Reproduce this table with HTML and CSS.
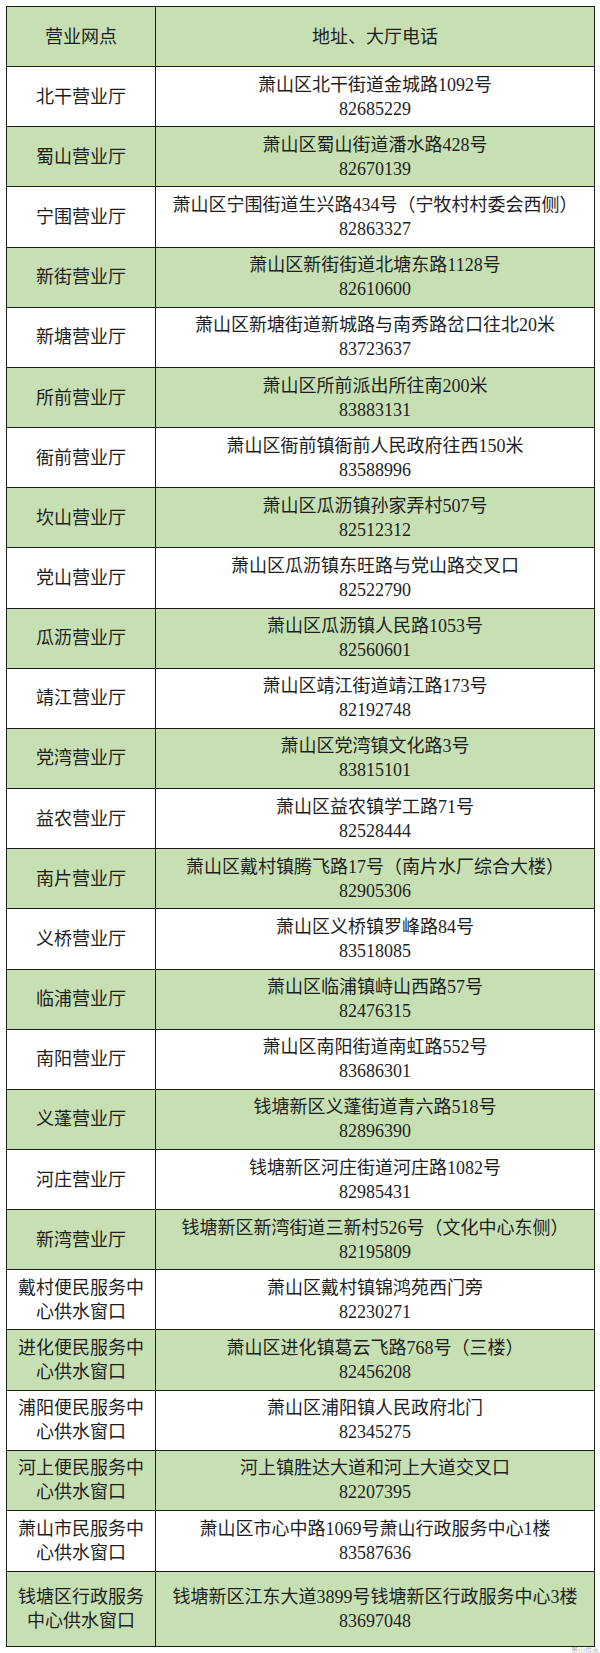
FILE: index.html
```html
<!DOCTYPE html>
<html lang="zh-CN">
<head>
<meta charset="utf-8">
<title>营业网点</title>
<link rel="stylesheet" href="styles.css">
</head>
<body>
<div class="page">
  <table class="sheet">
    <colgroup><col class="c-name"><col class="c-addr"></colgroup>
    <thead>
      <tr><th>营业网点</th><th>地址、大厅电话</th></tr>
    </thead>
    <tbody>
      <tr><td>北干营业厅</td><td><span class="l">萧山区北干街道金城路1092号</span><span class="l">82685229</span></td></tr>
      <tr><td>蜀山营业厅</td><td><span class="l">萧山区蜀山街道潘水路428号</span><span class="l">82670139</span></td></tr>
      <tr><td>宁围营业厅</td><td><span class="l">萧山区宁围街道生兴路434号（宁牧村村委会西侧）</span><span class="l">82863327</span></td></tr>
      <tr><td>新街营业厅</td><td><span class="l">萧山区新街街道北塘东路1128号</span><span class="l">82610600</span></td></tr>
      <tr><td>新塘营业厅</td><td><span class="l">萧山区新塘街道新城路与南秀路岔口往北20米</span><span class="l">83723637</span></td></tr>
      <tr><td>所前营业厅</td><td><span class="l">萧山区所前派出所往南200米</span><span class="l">83883131</span></td></tr>
      <tr><td>衙前营业厅</td><td><span class="l">萧山区衙前镇衙前人民政府往西150米</span><span class="l">83588996</span></td></tr>
      <tr><td>坎山营业厅</td><td><span class="l">萧山区瓜沥镇孙家弄村507号</span><span class="l">82512312</span></td></tr>
      <tr><td>党山营业厅</td><td><span class="l">萧山区瓜沥镇东旺路与党山路交叉口</span><span class="l">82522790</span></td></tr>
      <tr><td>瓜沥营业厅</td><td><span class="l">萧山区瓜沥镇人民路1053号</span><span class="l">82560601</span></td></tr>
      <tr><td>靖江营业厅</td><td><span class="l">萧山区靖江街道靖江路173号</span><span class="l">82192748</span></td></tr>
      <tr><td>党湾营业厅</td><td><span class="l">萧山区党湾镇文化路3号</span><span class="l">83815101</span></td></tr>
      <tr><td>益农营业厅</td><td><span class="l">萧山区益农镇学工路71号</span><span class="l">82528444</span></td></tr>
      <tr><td>南片营业厅</td><td><span class="l">萧山区戴村镇腾飞路17号（南片水厂综合大楼）</span><span class="l">82905306</span></td></tr>
      <tr><td>义桥营业厅</td><td><span class="l">萧山区义桥镇罗峰路84号</span><span class="l">83518085</span></td></tr>
      <tr><td>临浦营业厅</td><td><span class="l">萧山区临浦镇峙山西路57号</span><span class="l">82476315</span></td></tr>
      <tr><td>南阳营业厅</td><td><span class="l">萧山区南阳街道南虹路552号</span><span class="l">83686301</span></td></tr>
      <tr><td>义蓬营业厅</td><td><span class="l">钱塘新区义蓬街道青六路518号</span><span class="l">82896390</span></td></tr>
      <tr><td>河庄营业厅</td><td><span class="l">钱塘新区河庄街道河庄路1082号</span><span class="l">82985431</span></td></tr>
      <tr><td>新湾营业厅</td><td><span class="l">钱塘新区新湾街道三新村526号（文化中心东侧）</span><span class="l">82195809</span></td></tr>
      <tr><td>戴村便民服务中心供水窗口</td><td><span class="l">萧山区戴村镇锦鸿苑西门旁</span><span class="l">82230271</span></td></tr>
      <tr><td>进化便民服务中心供水窗口</td><td><span class="l">萧山区进化镇葛云飞路768号（三楼）</span><span class="l">82456208</span></td></tr>
      <tr><td>浦阳便民服务中心供水窗口</td><td><span class="l">萧山区浦阳镇人民政府北门</span><span class="l">82345275</span></td></tr>
      <tr><td>河上便民服务中心供水窗口</td><td><span class="l">河上镇胜达大道和河上大道交叉口</span><span class="l">82207395</span></td></tr>
      <tr class="r-61"><td>萧山市民服务中心供水窗口</td><td><span class="l">萧山区市心中路1069号萧山行政服务中心1楼</span><span class="l">83587636</span></td></tr>
      <tr class="r-last"><td>钱塘区行政服务中心供水窗口</td><td><span class="l">钱塘新区江东大道3899号钱塘新区行政服务中心3楼</span><span class="l">83697048</span></td></tr>
    </tbody>
  </table>
  <div class="mark">萧山供水</div>
</div>
</body>
</html>
```

FILE: styles.css
```css
html, body {
  margin: 0;
  padding: 0;
  background: #ffffff;
}

.page {
  position: relative;
  padding: 6px 0 0 6px;
  width: 594px;
  height: 1647px;
}

.sheet {
  border-collapse: collapse;
  table-layout: fixed;
  width: 588px;
  font-family: "Liberation Serif", "Noto Sans CJK SC", serif;
  font-size: 18px;
  line-height: 24px;
  color: #1e1e1e;
}

.c-name { width: 149px; }
.c-addr { width: 439px; }

.sheet th,
.sheet td {
  border: 1px solid #1c1c1c;
  padding: 0 4px;
  text-align: center;
  vertical-align: middle;
  font-weight: normal;
}

.sheet thead tr,
.sheet tbody tr {
  height: 60.16px;
}

.sheet thead tr,
.sheet tbody tr:nth-child(even) {
  background: #c6e0b4;
}

.sheet tbody tr.r-61 { height: 61px; }
.sheet tbody tr.r-last { height: 75px; }

.l { display: block; white-space: nowrap; }

.mark {
  position: absolute;
  right: 1px;
  bottom: -1px;
  font-family: "Noto Sans CJK SC", sans-serif;
  font-size: 7px;
  line-height: 8px;
  color: #b8b8b8;
}
```
